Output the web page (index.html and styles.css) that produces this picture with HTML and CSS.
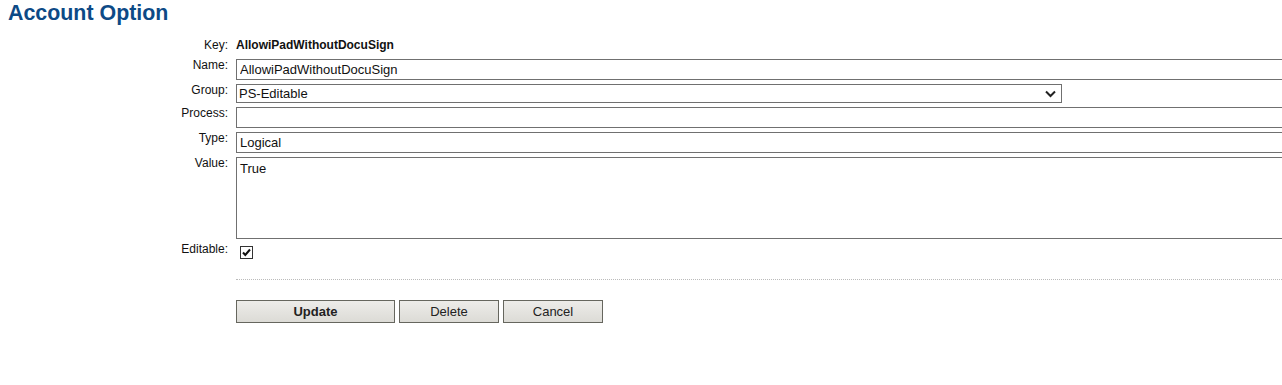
FILE: index.html
```html
<!DOCTYPE html>
<html>
<head>
    <title>Account Option</title>
    <meta charset="UTF-8">
    <link rel="stylesheet" href="styles.css">
</head>
<body>
    <h1 class="page-title">Account Option</h1>

    <form class="option-form">
        <div class="label">Key:</div>
        <div class="key-value">AllowiPadWithoutDocuSign</div>

        <div class="label">Name:</div>
        <div><input type="text" class="text-input" value="AllowiPadWithoutDocuSign"></div>

        <div class="label">Group:</div>
        <div class="select-wrap">
            <select class="group-select">
                <option>PS-Editable</option>
            </select>
            <svg class="select-arrow" width="11" height="8" viewBox="0 0 11 8">
                <path d="M1 1.5 L5.5 6 L10 1.5" fill="none" stroke="#222" stroke-width="2"/>
            </svg>
        </div>

        <div class="label">Process:</div>
        <div><input type="text" class="text-input" value=""></div>

        <div class="label">Type:</div>
        <div><input type="text" class="text-input" value="Logical"></div>

        <div class="label">Value:</div>
        <div><textarea class="value-input">True</textarea></div>

        <div class="label">Editable:</div>
        <div>
            <span class="check-box">
                <svg width="11" height="11" viewBox="0 0 11 11">
                    <path d="M2 5.5 L4.3 8 L9 2.5" fill="none" stroke="#111" stroke-width="2"/>
                </svg>
            </span>
        </div>

        <div></div>
        <div class="separator"></div>

        <div></div>
        <div class="buttons">
            <button type="button" class="btn btn-update">Update</button>
            <button type="button" class="btn">Delete</button>
            <button type="button" class="btn">Cancel</button>
        </div>
    </form>
</body>
</html>
```

FILE: styles.css
```css
html, body {
    overflow: hidden;
}

body {
    font-family: "Liberation Sans", Arial, sans-serif;
    background-color: #FFFFFF;
    color: #111111;
    margin: 0;
    padding: 0 8px;
}

.page-title {
    margin: 0;
    font-size: 21.4px;
    line-height: 26px;
    font-weight: bold;
    color: #0D4A86;
}

.option-form {
    display: grid;
    grid-template-columns: 220px 1100px;
    column-gap: 8px;
    row-gap: 4px;
    margin-top: 13px;
    align-items: start;
}

.label {
    font-size: 12px;
    line-height: 14px;
    text-align: right;
    margin-top: -1px;
}

.key-value {
    font-size: 12px;
    line-height: 14px;
    font-weight: bold;
    height: 17px;
    margin-top: -1px;
}

.text-input, .value-input, .group-select {
    display: block;
    box-sizing: border-box;
    width: 100%;
    font-family: "Liberation Sans", Arial, sans-serif;
    font-size: 13px;
    color: #111111;
    border: 1px solid #707070;
    background-color: #FFFFFF;
    margin: 0;
    outline: none;
}

.text-input {
    height: 21px;
    padding: 0 3px;
}

.value-input {
    height: 82px;
    padding: 3px 3px;
    resize: none;
}

.select-wrap {
    position: relative;
    width: 826px;
}

.group-select {
    height: 19px;
    padding: 0 2px;
    appearance: none;
    -webkit-appearance: none;
    border-radius: 0;
}

.select-arrow {
    position: absolute;
    right: 6px;
    top: 6px;
}

.check-box {
    display: block;
    box-sizing: border-box;
    width: 13px;
    height: 13px;
    margin: 3px 0 3px 4px;
    border: 1px solid #333333;
    background-color: #FFFFFF;
}

.check-box svg {
    display: block;
}

.separator {
    margin-top: 13px;
    border-top: 1px dotted #BBBBBB;
}

.buttons {
    display: flex;
    gap: 4px;
    margin-top: 16px;
}

.btn {
    box-sizing: border-box;
    height: 23px;
    width: 100px;
    font-family: "Liberation Sans", Arial, sans-serif;
    font-size: 13px;
    color: #222222;
    border: 1px solid #66665E;
    border-radius: 0;
    background: linear-gradient(#EDECE9, #DCDBD6);
    padding: 0;
    cursor: pointer;
}

.btn-update {
    width: 159px;
    font-weight: bold;
}
```
